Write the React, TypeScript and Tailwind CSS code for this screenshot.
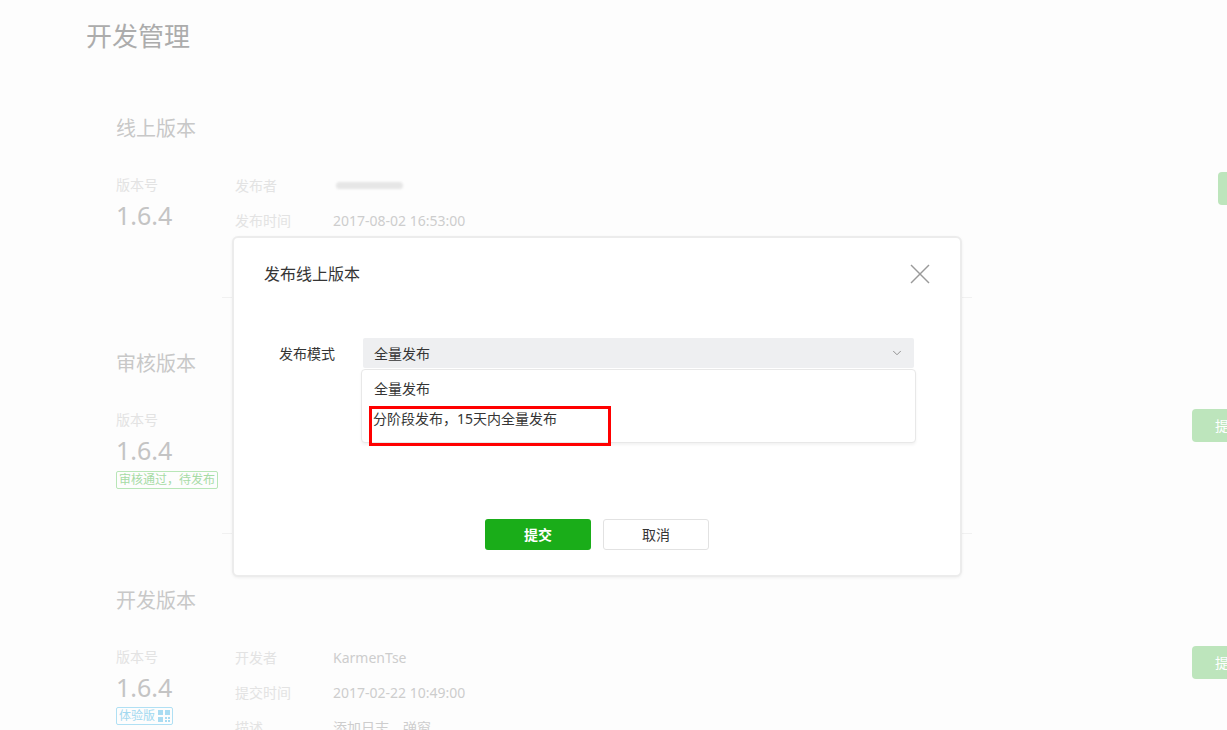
import { ChevronDown } from "lucide-react";

interface InfoRow {
  label: string;
  value: string;
}

interface Section {
  title: string;
  height: string;
  titleMt: string;
  rows: InfoRow[];
  tag?: "review" | "trial";
  btnClass: string;
  blurredFirst?: boolean;
}

const sections: Section[] = [
  {
    title: "线上版本",
    height: "h-[226px]",
    titleMt: "mt-[43px]",
    rows: [
      { label: "发布者", value: "" },
      { label: "发布时间", value: "2017-08-02 16:53:00" },
    ],
    btnClass: "-mr-[26px] -mt-[2px]",
    blurredFirst: true,
  },
  {
    title: "审核版本",
    height: "h-[236px]",
    titleMt: "mt-[52px]",
    rows: [],
    tag: "review",
    btnClass: "",
  },
  {
    title: "开发版本",
    height: "h-[200px]",
    titleMt: "mt-[53px]",
    rows: [
      { label: "开发者", value: "KarmenTse" },
      { label: "提交时间", value: "2017-02-22 10:49:00" },
      { label: "描述", value: "添加日志，弹窗" },
    ],
    tag: "trial",
    btnClass: "",
  },
];

function QrIcon() {
  return (
    <svg width="12" height="12" viewBox="0 0 12 12" fill="#a9dcf2">
      <rect x="0" y="0" width="5" height="5" />
      <rect x="7" y="0" width="5" height="5" />
      <rect x="0" y="7" width="5" height="5" />
      <rect x="7" y="7" width="2" height="2" />
      <rect x="10" y="10" width="2" height="2" />
      <rect x="10" y="7" width="2" height="2" />
      <rect x="7" y="10" width="2" height="2" />
    </svg>
  );
}

function VersionSection({ s, last }: { s: Section; last: boolean }) {
  return (
    <div className={`${s.height} flex flex-col`}>
      <div className={`${s.titleMt} h-[28px] leading-[28px] text-[20px] text-[#c8c8c8]`}>
        {s.title}
      </div>
      <div className="mt-[31px] flex w-[1176px] items-start">
        <div className="w-[119px] shrink-0">
          <div className="h-[22px] leading-[22px] text-[14px] text-[#e3e3e3]">版本号</div>
          <div className="mt-[4px] h-[30px] leading-[30px] text-[25px] text-[#c4c4c4]">1.6.4</div>
          {s.tag === "review" && (
            <div className="mt-[6px] inline-flex h-[18px] items-center rounded-[2px] border border-[#b8e6b7] px-[2px] text-[12px] leading-none text-[#a6dba5]">
              审核通过，待发布
            </div>
          )}
          {s.tag === "trial" && (
            <div className="mt-[4px] inline-flex h-[18px] items-center gap-[3px] rounded-[2px] border border-[#b0e0f4] px-[2px] text-[12px] leading-none text-[#a2d9f0]">
              体验版
              <QrIcon />
            </div>
          )}
        </div>
        <div className="flex flex-1 flex-col gap-[13px]">
          {s.rows.map((r, i) => (
            <div key={r.label} className="flex h-[22px] items-center text-[14px]">
              <div className="w-[98px] text-[#e3e3e3]">{r.label}</div>
              {s.blurredFirst && i === 0 ? (
                <div className="ml-[3px] h-[7px] w-[67px] rounded-full bg-[#e6e6e6] blur-[1px]" />
              ) : (
                <div className="text-[#cdcdcd]">{r.value}</div>
              )}
            </div>
          ))}
        </div>
        <div
          className={`${s.btnClass} flex h-[33px] w-[100px] shrink-0 items-center rounded-[4px] bg-[#bde5bc] pl-[23px] text-[14px] text-white`}
        >
          提交
        </div>
      </div>
      {!last && <div className="mt-auto ml-[106px] h-px w-[750px] bg-[#f1f1f1]" />}
    </div>
  );
}

export default function App() {
  return (
    <div className="relative h-[730px] w-[1227px] overflow-hidden bg-[#fdfdfd] font-['Noto_Sans','Noto_Sans_CJK_SC',sans-serif]">
      <div className="pl-[86px]">
        <div className="h-[72px] leading-[72px] text-[26px] text-[#acacac]">开发管理</div>
        <div className="pl-[30px]">
          {sections.map((s, i) => (
            <VersionSection key={s.title} s={s} last={i === sections.length - 1} />
          ))}
        </div>
      </div>

      {/* dialog */}
      <div className="absolute left-[232px] top-[236px] h-[341px] w-[730px] rounded-[6px] border-2 border-[#ececec] bg-white shadow-[0_1px_3px_rgba(0,0,0,0.06)]">
        <div className="flex h-[72px] items-center justify-between pl-[30px] pr-[30px]">
          <span className="text-[16px] text-[#353535]">发布线上版本</span>
          <svg width="20" height="20" viewBox="0 0 20 20" stroke="#9a9a9a" strokeWidth="1.4">
            <line x1="1" y1="1" x2="19" y2="19" />
            <line x1="19" y1="1" x2="1" y2="19" />
          </svg>
        </div>
        <div className="mt-[28px] flex items-center pl-[45px] pr-[46px]">
          <div className="w-[84px] text-[14px] text-[#353535]">发布模式</div>
          <div className="relative flex-1">
            <div className="flex h-[30px] items-center justify-between rounded-[2px] bg-[#eeeff1] pl-[11px] pr-[10px] text-[14px] text-[#353535]">
              <span>全量发布</span>
              <ChevronDown className="h-[14px] w-[14px] text-[#8a8a8a]" strokeWidth={1.6} />
            </div>
            <div className="absolute -left-[2px] -right-[2px] top-[31px] h-[74px] rounded-[4px] border border-[#e8e8e8] bg-white pt-[3px] shadow-[0_2px_3px_rgba(0,0,0,0.05)]">
              <div className="flex h-[30px] items-center pl-[12px] text-[14px] text-[#353535]">全量发布</div>
              <div className="flex h-[30px] items-center pl-[11px] text-[14px] text-[#353535]">
                分阶段发布，15天内全量发布
              </div>
              <div className="absolute left-[7px] top-[36px] h-[40px] w-[242px] border-[3px] border-[#ff0000]" />
            </div>
          </div>
        </div>
        <div className="mt-[151px] flex justify-center gap-[12px]">
          <button className="flex h-[31px] w-[106px] items-center justify-center rounded-[3px] bg-[#1aad19] text-[14px] font-semibold text-white">
            提交
          </button>
          <button className="flex h-[31px] w-[106px] items-center justify-center rounded-[3px] border border-[#e2e2e2] bg-white text-[14px] text-[#353535]">
            取消
          </button>
        </div>
      </div>
    </div>
  );
}
